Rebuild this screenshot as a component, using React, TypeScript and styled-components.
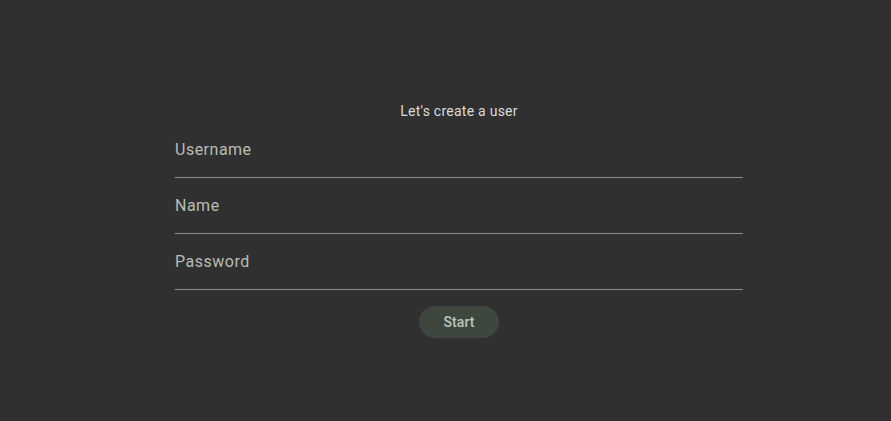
import React from "react";
import styled, { createGlobalStyle } from "styled-components";

const Global = createGlobalStyle`
  html, body { margin: 0; padding: 0; background: #303030; }
  body { font-family: Roboto, "Noto Sans", sans-serif; }
`;

const Page = styled.div`
  min-height: 421px;
  box-sizing: border-box;
  padding: 101px 0 0 27px;
  display: flex;
  justify-content: center;
`;

const Form = styled.form`
  width: 568px;
  display: flex;
  flex-direction: column;
  align-items: stretch;
`;

const Title = styled.div`
  text-align: center;
  font-size: 14px;
  line-height: 21px;
  letter-spacing: 0.25px;
  color: #dadada;
`;

const Field = styled.label`
  height: 55px;
  display: flex;
  align-items: center;
  border-bottom: 1px solid #8c8c8c;
`;

const Input = styled.input`
  width: 100%;
  background: transparent;
  border: none;
  outline: none;
  padding: 0;
  font-family: Roboto, sans-serif;
  font-size: 16px;
  line-height: 24px;
  color: #e0e0e0;
  letter-spacing: 0.5px;
  &::placeholder { color: #b6bdb4; opacity: 1; }
`;

const Actions = styled.div`
  display: flex;
  justify-content: center;
  padding-top: 16px;
`;

const Button = styled.button`
  width: 80px;
  height: 32px;
  border: none;
  border-radius: 16px;
  background: #3e473f;
  color: #bcc6bb;
  font-family: Roboto, sans-serif;
  font-weight: 500;
  font-size: 14px;
  letter-spacing: 0.1px;
  cursor: pointer;
`;

export default function App() {
  return (
    <>
      <Global />
      <Page>
        <Form onSubmit={(e) => e.preventDefault()}>
          <Title>Let's create a user</Title>
          <Field><Input placeholder="Username" /></Field>
          <Field><Input placeholder="Name" /></Field>
          <Field><Input type="password" placeholder="Password" /></Field>
          <Actions><Button type="submit">Start</Button></Actions>
        </Form>
      </Page>
    </>
  );
}
